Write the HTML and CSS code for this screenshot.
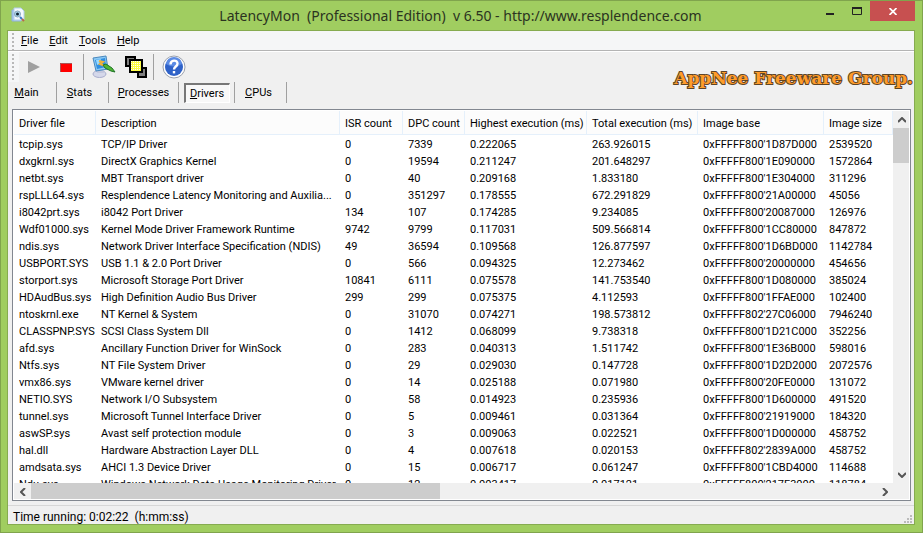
FILE: index.html
```html
<!DOCTYPE html>
<html lang="en">
<head>
    <meta charset="UTF-8">
    <meta name="viewport" content="width=device-width, initial-scale=1.0">
    <title>LatencyMon</title>
    <link rel="stylesheet" href="styles.css">
</head>
<body>
    <div class="window">
        <header class="titlebar">
            <svg class="app-icon" width="14" height="16" viewBox="0 0 14 16">
                <path d="M1 3h9v11H1z" fill="#a9c9ee" stroke="#8fb2dd"/>
                <path d="M3 1h7l3 3v9H3z" fill="#f4f9fe" stroke="#b3cdea"/>
                <circle cx="6.500" cy="7" r="3" fill="#a9d8ee" stroke="#8aa6bb"/>
                <circle cx="6.500" cy="7" r="1.500" fill="#123"/>
                <path d="M9 10l2 2" stroke="#3b7bc4" stroke-width="2"/>
                <path d="M11 12l2 2" stroke="#b8694a" stroke-width="2"/>
            </svg>
            <h1>LatencyMon&nbsp; (Professional Edition)&nbsp; v 6.50 - http://www.resplendence.com</h1>
            <div class="controls">
                <button class="control" aria-label="Minimize"><svg width="8" height="8"><path d="M0 6h8v2H0z" fill="#222"/></svg></button>
                <button class="control" aria-label="Maximize"><svg width="10" height="8"><path d="M.5 1h9v6.500h-9z" fill="none" stroke="#222"/><path d="M0 0h10v2H0z" fill="#222"/></svg></button>
                <button class="control close" aria-label="Close"><svg width="8" height="7" viewBox="0 0 8 7"><path d="M.5 0L7.500 7M7.500 0L.5 7" stroke="#fff" stroke-width="1.700"/></svg></button>
            </div>
        </header>

        <main class="client">
            <nav class="menubar">
                <span class="grip"></span>
                <button><u>F</u>ile</button>
                <button><u>E</u>dit</button>
                <button><u>T</u>ools</button>
                <button><u>H</u>elp</button>
            </nav>

            <div class="toolbar">
                <span class="grip"></span>
                <button class="tool" aria-label="Start"><svg width="12" height="12"><path d="M0 0l12 6-12 6z" fill="#a0a0a0"/></svg></button>
                <button class="tool" aria-label="Stop"><svg width="12" height="9"><path d="M0 0h12v9H0z" fill="#f00"/><path d="M.5 9V.5H12" fill="none" stroke="#a55"/></svg></button>
                <span class="divider"></span>
                <button class="tool" aria-label="Options">
                    <svg width="24" height="24" viewBox="0 0 24 24">
                        <ellipse cx="7.500" cy="19" rx="6.500" ry="3.500" fill="#d5d8ea" stroke="#a9aecd"/>
                        <path d="M6 13h5l1 5H5z" fill="#c4c8de"/>
                        <path d="M1 3l13-2 2 13-12 2z" fill="#8ccaf6" stroke="#4a88bd"/>
                        <path d="M3 5l10-2 1 9-9 2z" fill="#2f8ee0"/>
                        <path d="M4 5l5-1-2 5-2 1z" fill="#9bdcff"/>
                        <path d="M7 6l4 1-3 2 5 2" fill="none" stroke="#f2b13a" stroke-width="2"/>
                        <path d="M11 10l3-1 6 4 3 4-4-1-6-3z" fill="#4fb534" stroke="#1f7427"/>
                    </svg>
                </button>
                <button class="tool" aria-label="Windows">
                    <svg width="22" height="22" viewBox="0 0 22 22">
                        <path d="M1 1h9v9H1zM13 12h8v9h-8z" fill="#808080" stroke="#000" stroke-width="2"/>
                        <path d="M5 4h12v12H5z" fill="#ffff45" stroke="#000" stroke-width="2"/>
                        <path d="M6 5.500h10M6 7.500h10M6 9.500h10M6 11.500h10M6 13.500h10" stroke="#fff" stroke-dasharray="1 1"/>
                    </svg>
                </button>
                <span class="divider"></span>
                <button class="tool" aria-label="Help">
                    <svg width="24" height="24" viewBox="0 0 24 24">
                        <circle cx="12" cy="12" r="11" fill="#fff" stroke="#9aa0ac"/>
                        <circle cx="12" cy="12" r="9" fill="#2f62c8"/>
                        <path d="M4 9a8 7 0 0 1 16 0q-8 5-16 0z" fill="#5b8be4"/>
                        <path d="M8.500 9.500c0-5 7-5 7-1 0 3-3.500 3-3.500 6" fill="none" stroke="#fff" stroke-width="2.400"/>
                        <path d="M10.800 16h2.400v2.400h-2.400z" fill="#fff"/>
                    </svg>
                </button>
                <span class="brand">AppNee Freeware Group.</span>
            </div>

            <nav class="tabs">
                <button class="tab tab-main"><u>M</u>ain</button>
                <button class="tab tab-stats"><u>S</u>tats</button>
                <button class="tab tab-processes"><u>P</u>rocesses</button>
                <button class="tab tab-drivers"><span class="pressed"><u>D</u>rivers</span></button>
                <button class="tab tab-cpus"><u>C</u>PUs</button>
            </nav>

            <section class="list">
                <div class="rows">
                    <table>
                        <colgroup>
                            <col class="c-file"><col class="c-desc"><col class="c-isr"><col class="c-dpc">
                            <col class="c-high"><col class="c-total"><col class="c-base"><col>
                        </colgroup>
                        <thead>
                            <tr><th>Driver file</th><th>Description</th><th>ISR count</th><th>DPC count</th><th>Highest execution (ms)</th><th>Total execution (ms)</th><th>Image base</th><th>Image size</th></tr>
                        </thead>
                        <tbody>
                            <tr><td>tcpip.sys</td><td>TCP/IP Driver</td><td>0</td><td>7339</td><td>0.222065</td><td>263.926015</td><td>0xFFFFF800'1D87D000</td><td>2539520</td></tr>
                            <tr><td>dxgkrnl.sys</td><td>DirectX Graphics Kernel</td><td>0</td><td>19594</td><td>0.211247</td><td>201.648297</td><td>0xFFFFF800'1E090000</td><td>1572864</td></tr>
                            <tr><td>netbt.sys</td><td>MBT Transport driver</td><td>0</td><td>40</td><td>0.209168</td><td>1.833180</td><td>0xFFFFF800'1E304000</td><td>311296</td></tr>
                            <tr><td>rspLLL64.sys</td><td>Resplendence Latency Monitoring and Auxilia...</td><td>0</td><td>351297</td><td>0.178555</td><td>672.291829</td><td>0xFFFFF800'21A00000</td><td>45056</td></tr>
                            <tr><td>i8042prt.sys</td><td>i8042 Port Driver</td><td>134</td><td>107</td><td>0.174285</td><td>9.234085</td><td>0xFFFFF800'20087000</td><td>126976</td></tr>
                            <tr><td>Wdf01000.sys</td><td>Kernel Mode Driver Framework Runtime</td><td>9742</td><td>9799</td><td>0.117031</td><td>509.566814</td><td>0xFFFFF800'1CC80000</td><td>847872</td></tr>
                            <tr><td>ndis.sys</td><td>Network Driver Interface Specification (NDIS)</td><td>49</td><td>36594</td><td>0.109568</td><td>126.877597</td><td>0xFFFFF800'1D6BD000</td><td>1142784</td></tr>
                            <tr><td>USBPORT.SYS</td><td>USB 1.1 &amp; 2.0 Port Driver</td><td>0</td><td>566</td><td>0.094325</td><td>12.273462</td><td>0xFFFFF800'20000000</td><td>454656</td></tr>
                            <tr><td>storport.sys</td><td>Microsoft Storage Port Driver</td><td>10841</td><td>6111</td><td>0.075578</td><td>141.753540</td><td>0xFFFFF800'1D080000</td><td>385024</td></tr>
                            <tr><td>HDAudBus.sys</td><td>High Definition Audio Bus Driver</td><td>299</td><td>299</td><td>0.075375</td><td>4.112593</td><td>0xFFFFF800'1FFAE000</td><td>102400</td></tr>
                            <tr><td>ntoskrnl.exe</td><td>NT Kernel &amp; System</td><td>0</td><td>31070</td><td>0.074271</td><td>198.573812</td><td>0xFFFFF802'27C06000</td><td>7946240</td></tr>
                            <tr><td>CLASSPNP.SYS</td><td>SCSI Class System Dll</td><td>0</td><td>1412</td><td>0.068099</td><td>9.738318</td><td>0xFFFFF800'1D21C000</td><td>352256</td></tr>
                            <tr><td>afd.sys</td><td>Ancillary Function Driver for WinSock</td><td>0</td><td>283</td><td>0.040313</td><td>1.511742</td><td>0xFFFFF800'1E36B000</td><td>598016</td></tr>
                            <tr><td>Ntfs.sys</td><td>NT File System Driver</td><td>0</td><td>29</td><td>0.029030</td><td>0.147728</td><td>0xFFFFF800'1D2D2000</td><td>2072576</td></tr>
                            <tr><td>vmx86.sys</td><td>VMware kernel driver</td><td>0</td><td>14</td><td>0.025188</td><td>0.071980</td><td>0xFFFFF800'20FE0000</td><td>131072</td></tr>
                            <tr><td>NETIO.SYS</td><td>Network I/O Subsystem</td><td>0</td><td>58</td><td>0.014923</td><td>0.235936</td><td>0xFFFFF800'1D600000</td><td>491520</td></tr>
                            <tr><td>tunnel.sys</td><td>Microsoft Tunnel Interface Driver</td><td>0</td><td>5</td><td>0.009461</td><td>0.031364</td><td>0xFFFFF800'21919000</td><td>184320</td></tr>
                            <tr><td>aswSP.sys</td><td>Avast self protection module</td><td>0</td><td>3</td><td>0.009063</td><td>0.022521</td><td>0xFFFFF800'1D000000</td><td>458752</td></tr>
                            <tr><td>hal.dll</td><td>Hardware Abstraction Layer DLL</td><td>0</td><td>4</td><td>0.007618</td><td>0.020153</td><td>0xFFFFF802'2839A000</td><td>458752</td></tr>
                            <tr><td>amdsata.sys</td><td>AHCI 1.3 Device Driver</td><td>0</td><td>15</td><td>0.006717</td><td>0.061247</td><td>0xFFFFF800'1CBD4000</td><td>114688</td></tr>
                            <tr><td>Ndu.sys</td><td>Windows Network Data Usage Monitoring Driver</td><td>0</td><td>12</td><td>0.003417</td><td>0.017121</td><td>0xFFFFF800'217F3000</td><td>118784</td></tr>
                        </tbody>
                    </table>
                </div>
                <div class="vscroll">
                    <button aria-label="Scroll up"><svg width="8" height="6"><path d="M0 5l4-4 4 4" fill="none" stroke="#555" stroke-width="2"/></svg></button>
                    <span class="thumb"></span>
                    <button aria-label="Scroll down"><svg width="8" height="6"><path d="M0 1l4 4 4-4" fill="none" stroke="#555" stroke-width="2"/></svg></button>
                </div>
                <div class="hscroll">
                    <button aria-label="Scroll left"><svg width="6" height="8"><path d="M5 0L1 4l4 4" fill="none" stroke="#555" stroke-width="2"/></svg></button>
                    <span class="thumb"></span>
                    <button aria-label="Scroll right"><svg width="6" height="8"><path d="M1 0l4 4-4 4" fill="none" stroke="#555" stroke-width="2"/></svg></button>
                </div>
            </section>

            <footer class="statusbar">
                <span>Time running: 0:02:22&nbsp; (h:mm:ss)</span>
                <svg width="8" height="8"><path d="M6 0h2v2H6zM3 3h2v2H3zM6 3h2v2H6zM0 6h2v2H0zM3 6h2v2H3zM6 6h2v2H6z" fill="#bbb"/></svg>
            </footer>
        </main>
    </div>
</body>
</html>
```

FILE: styles.css
```css
* {
    box-sizing: border-box;
}
body {
    margin: 0;
    font-family: Roboto, "Noto Sans", sans-serif;
    font-size: 11px;
    color: #000;
}
button {
    margin: 0;
    padding: 0;
    border: 0;
    background: none;
    font: inherit;
    color: inherit;
}
svg {
    display: block;
}

/* window frame */
.window {
    display: flex;
    flex-direction: column;
    height: 100vh;
    padding: 0 7px 7px 6px;
    border: 1px solid #80a44d;
    background: #a0cd60;
}
.titlebar {
    display: flex;
    height: 29px;
    flex: none;
}
.app-icon {
    margin: 6px 0 0 4px;
}
.titlebar h1 {
    flex: 1;
    margin: 0;
    padding-left: 80px;
    font-family: "Noto Sans", sans-serif;
    font-size: 14px;
    font-weight: normal;
    line-height: 30px;
    text-align: center;
    color: #2b3320;
    white-space: nowrap;
}
.controls {
    display: flex;
    align-items: flex-start;
}
.control {
    display: flex;
    align-items: center;
    justify-content: center;
    width: 27px;
    height: 20px;
}
.control.close {
    width: 45px;
    background: #c75050;
}

.client {
    flex: 1;
    min-height: 0;
    display: flex;
    flex-direction: column;
    border: 1px solid #86ab50;
    background: #f0f0f0;
}

/* menu and toolbar */
.menubar {
    display: flex;
    align-items: center;
    height: 20px;
    padding-left: 4px;
    background: #f5f6f7;
    border-bottom: 1px solid #b4b4b4;
}
.menubar button {
    margin: 0 8px 0 3px;
}
.grip {
    width: 2px;
    align-self: stretch;
    margin: 2px 4px 0 0;
    background: repeating-linear-gradient(#b8b8b8 0 2px, transparent 2px 4px);
}
.toolbar {
    display: flex;
    align-items: center;
    height: 31px;
    padding-left: 4px;
    border-top: 1px solid #fff;
    background: linear-gradient(90deg, #f5f6f7 11px, #f0f0f0 11px);
}
.tool {
    display: flex;
    align-items: center;
    justify-content: center;
    width: 32px;
    height: 26px;
}
.divider {
    width: 1px;
    height: 26px;
    margin: 0 4px 0 1px;
    background: #a0a0a0;
}
.brand {
    margin-left: auto;
    padding-right: 1px;
    align-self: flex-end;
    font-family: "DejaVu Serif", serif;
    font-size: 17px;
    font-weight: bold;
    line-height: 8px;
    color: #ff9c2a;
    -webkit-text-stroke: 2px #5f4526;
    paint-order: stroke fill;
    white-space: nowrap;
}

/* tabs */
.tabs {
    display: flex;
    height: 21px;
    margin-bottom: 6px;
}
.tab {
    border-right: 1px solid #a0a0a0;
}
.tab-main { width: 49px; padding-right: 11px; }
.tab-stats { width: 52px; padding-right: 6px; }
.tab-processes { width: 70px; }
.tab-drivers { width: 56px; }
.tab-cpus { width: 52px; padding-right: 4px; }
.pressed {
    display: block;
    width: 46px;
    height: 20px;
    margin: 0 auto;
    border: 1px solid #fff;
    border-top: 2px solid #777;
    border-left: 2px solid #777;
    background: #f8f8f8;
    line-height: 17px;
}

/* driver list */
.list {
    flex: 1;
    min-height: 0;
    display: grid;
    grid-template-columns: minmax(0, 1fr) 16px;
    grid-template-rows: minmax(0, 1fr) 16px;
    margin: 0 3px 0 4px;
    padding: 1px;
    border: 1px solid #828790;
    background: #fff;
}
.rows {
    overflow: hidden;
}
table {
    width: 100%;
    table-layout: fixed;
    border-collapse: separate;
    border-spacing: 0;
}
.c-file { width: 82px; }
.c-desc { width: 244px; }
.c-isr { width: 63px; }
.c-dpc { width: 62px; }
.c-high { width: 122px; }
.c-total { width: 111px; }
.c-base { width: 126px; }
th, td {
    height: 17px;
    padding: 2px 0 0 5px;
    line-height: 15px;
    text-align: left;
    font-weight: normal;
    white-space: nowrap;
}
th {
    height: 24px;
    border-right: 1px solid #e5f0fb;
    border-bottom: 1px solid #e5f0fb;
    background: #fcfcfc;
}
.vscroll, .hscroll {
    display: flex;
    background: #f0f0f0;
}
.vscroll {
    flex-direction: column;
}
.hscroll {
    grid-column: 1 / 3;
    padding-right: 16px;
}
.vscroll button, .hscroll button {
    display: flex;
    align-items: center;
    justify-content: center;
    width: 17px;
    height: 17px;
}
.thumb {
    background: #cdcdcd;
}
.vscroll .thumb {
    height: 35px;
    margin-bottom: auto;
}
.hscroll .thumb {
    width: 409px;
    margin-right: auto;
}

/* status bar */
.statusbar {
    display: flex;
    align-items: center;
    justify-content: space-between;
    height: 19px;
    margin-top: 4px;
    padding: 3px 2px 0 5px;
    border-top: 1px solid #d7d7d7;
    font-size: 12px;
}
.statusbar svg {
    align-self: flex-end;
    margin-bottom: 1px;
}
```
